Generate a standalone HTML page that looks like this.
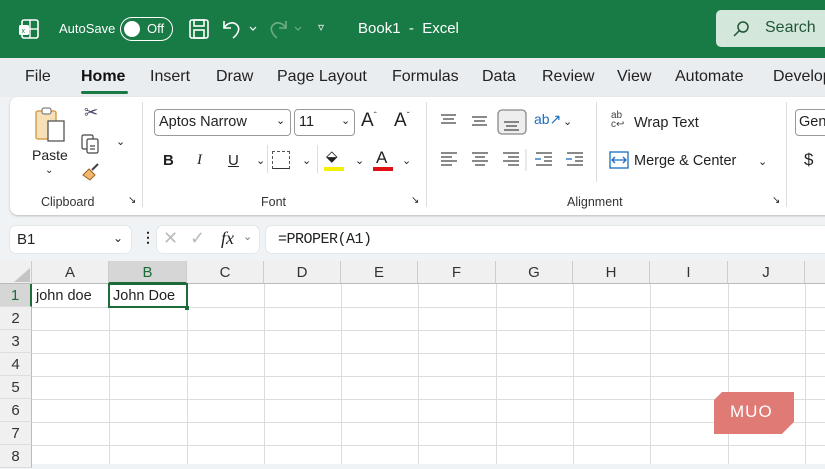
<!DOCTYPE html>
<html><head><meta charset="utf-8"><style>
*{margin:0;padding:0;box-sizing:border-box}
body{width:825px;height:464px;overflow:hidden;background:#f0f3f5;font-family:"Liberation Sans",sans-serif;position:relative;color:#222}
.abs{position:absolute}
.title{left:0;top:0;width:825px;height:58px;background:#187a44;color:#fff}
.tabs{top:58px;left:0;width:825px;height:39px;background:#e9edf0;font-size:16px}
.tabs span{position:absolute;top:10px}
.rib{left:10px;top:97px;width:830px;height:118px;background:#fff;border-radius:8px;box-shadow:0 1px 2px #bbb}
.lbl{font-size:12.5px;color:#333}
.box{border:1px solid #999;border-radius:4px;background:#fff}
.sep{width:1px;background:#ddd}
.grid{left:0;top:261px;width:825px;height:203px;background:#fff}
.ch{top:0;height:23px;background:#f0f0f0;border-bottom:1px solid #bbb;font-size:15px;text-align:center;line-height:23px;border-right:1px solid #ccc;color:#333}
.rh{left:0;width:32px;height:23px;background:#f0f0f0;border-right:1px solid #bbb;font-size:15px;text-align:center;line-height:24px;color:#333;border-bottom:1px solid #ddd}
</style></head><body>
<div class="abs title">
 <svg class="abs" style="left:18px;top:18px" width="22" height="22" viewBox="0 0 22 22"><rect x="4" y="2" width="16" height="18" rx="2" fill="none" stroke="#fff" stroke-width="1.6"/><line x1="12" y1="2" x2="12" y2="20" stroke="#fff" stroke-width="1.4"/><line x1="4" y1="11" x2="20" y2="11" stroke="#fff" stroke-width="1.4"/><rect x="1" y="7" width="10" height="10" rx="1.5" fill="#fff"/><text x="3.5" y="15" font-size="7" fill="#187a44" font-family="Liberation Sans">x</text></svg>
 <span class="abs" style="left:59px;top:21px;font-size:13px">AutoSave</span>
 <div class="abs" style="left:120px;top:17px;width:53px;height:24px;border:1.5px solid #fff;border-radius:12px"><div class="abs" style="left:3px;top:2.5px;width:16px;height:16px;border-radius:50%;background:#fff"></div><span class="abs" style="left:26px;top:3px;font-size:13px">Off</span></div>
 <svg class="abs" style="left:188px;top:18px" width="22" height="22" viewBox="0 0 22 22" fill="none" stroke="#fff" stroke-width="1.6"><rect x="2" y="2" width="18" height="18" rx="2"/><rect x="6" y="2" width="10" height="6"/><rect x="6" y="12" width="10" height="8"/></svg>
 <svg class="abs" style="left:220px;top:17px" width="44" height="24" viewBox="0 0 44 24" fill="none" stroke="#fff" stroke-width="1.6"><path d="M4 4v7h7M4 11c3-5 9-7 13-3 4 4 0 10-4 13"/><path d="M30 10l3 3 3-3" stroke-width="1.2"/></svg>
 <svg class="abs" style="left:268px;top:17px" width="44" height="24" viewBox="0 0 44 24" fill="none" stroke="#6fae88" stroke-width="1.6"><path d="M18 4v7h-7M18 11c-3-5-9-7-13-3-4 4 0 10 4 13"/><path d="M27 10l3 3 3-3" stroke-width="1.2"/></svg>
 <span class="abs" style="left:318px;top:20px;font-size:12px">▿</span>
 <span class="abs" style="left:358px;top:20px;font-size:15px">Book1 &nbsp;-&nbsp; Excel</span>
 <div class="abs" style="left:716px;top:10px;width:120px;height:37px;background:#d3e8db;border-radius:5px;color:#225533"><svg class="abs" style="left:16px;top:10px" width="18" height="18" viewBox="0 0 18 18" fill="none" stroke="#225533" stroke-width="1.5"><circle cx="11" cy="7" r="5"/><line x1="7.5" y1="10.5" x2="2" y2="16"/></svg><span class="abs" style="left:49px;top:9px;font-size:16px">Search</span></div>
</div>
<div class="abs tabs">
 <span style="left:25px">File</span><span style="left:81px;font-weight:bold;color:#111">Home</span>
 <div class="abs" style="left:81px;top:33px;width:47px;height:3px;background:#187a44;border-radius:2px"></div>
 <span style="left:150px">Insert</span><span style="left:216px">Draw</span><span style="left:277px">Page Layout</span><span style="left:392px">Formulas</span><span style="left:482px">Data</span><span style="left:542px">Review</span><span style="left:617px">View</span><span style="left:675px">Automate</span><span style="left:773px">Developer</span>
</div>
<div class="abs rib">
 <svg class="abs" style="left:24px;top:8px" width="36" height="40" viewBox="0 0 36 40"><rect x="2" y="6" width="20" height="28" rx="2" fill="#f5e0b8" stroke="#d9a050" stroke-width="1.5"/><rect x="8" y="3" width="9" height="6" rx="2" fill="#fff" stroke="#666"/><rect x="14" y="16" width="16" height="20" fill="#fff" stroke="#555" stroke-width="1.3"/></svg>
 <span class="abs" style="left:22px;top:50px;font-size:14px">Paste</span><span class="abs" style="left:35px;top:68px;font-size:10px">⌄</span>
 <span class="abs" style="left:74px;top:6px;font-size:17px;color:#446">✂</span>
 <svg class="abs" style="left:70px;top:36px" width="22" height="22" viewBox="0 0 22 22" fill="none" stroke="#444" stroke-width="1.2"><rect x="2" y="2" width="11" height="14" rx="1.5"/><rect x="7" y="6" width="11" height="14" rx="1.5" fill="#fff"/><line x1="10" y1="13" x2="15" y2="13"/><line x1="10" y1="16" x2="15" y2="16"/></svg>
 <span class="abs" style="left:106px;top:38px;font-size:11px">⌄</span>
 <svg class="abs" style="left:70px;top:64px" width="22" height="22" viewBox="0 0 22 22"><path d="M3 14l6-6 6 6-5 5z" fill="#f1b870" stroke="#a06020"/><path d="M12 9l6-6" stroke="#444" stroke-width="2"/></svg>
 <span class="abs lbl" style="left:31px;top:98px">Clipboard</span><span class="abs" style="left:118px;top:98px;font-size:10px">↘</span>
 <div class="abs sep" style="left:132px;top:5px;height:105px"></div>
 <div class="abs box" style="left:144px;top:12px;width:137px;height:27px"><span class="abs" style="left:4px;top:4px;font-size:14.5px">Aptos Narrow</span><span class="abs" style="left:121px;top:4px;font-size:11px">⌄</span></div>
 <div class="abs box" style="left:284px;top:12px;width:61px;height:27px"><span class="abs" style="left:4px;top:4px;font-size:14.5px">11</span><span class="abs" style="left:46px;top:4px;font-size:11px">⌄</span></div>
 <span class="abs" style="left:351px;top:13px;font-size:19px">A<sup style="font-size:9px">ˆ</sup></span><span class="abs" style="left:384px;top:13px;font-size:19px">A<sup style="font-size:9px">ˇ</sup></span>
 <span class="abs" style="left:153px;top:55px;font-size:15px;font-weight:bold">B</span>
 <span class="abs" style="left:187px;top:55px;font-size:15px;font-style:italic;font-family:'Liberation Serif'">I</span>
 <span class="abs" style="left:218px;top:55px;font-size:15px;text-decoration:underline">U</span><span class="abs" style="left:246px;top:57px;font-size:11px">⌄</span>
 <div class="abs sep" style="left:257px;top:48px;height:28px"></div>
 <div class="abs" style="left:262px;top:54px;width:18px;height:18px;border:1px dashed #555;border-bottom:1.5px solid #333"></div><span class="abs" style="left:292px;top:57px;font-size:11px">⌄</span>
 <div class="abs sep" style="left:307px;top:48px;height:28px"></div>
 <span class="abs" style="left:316px;top:50px;font-size:15px">⬙</span><div class="abs" style="left:314px;top:70px;width:20px;height:4px;background:#f4f000"></div><span class="abs" style="left:345px;top:57px;font-size:11px">⌄</span>
 <span class="abs" style="left:366px;top:51px;font-size:17px">A</span><div class="abs" style="left:363px;top:70px;width:20px;height:4px;background:#e01010"></div><span class="abs" style="left:392px;top:57px;font-size:11px">⌄</span>
 <span class="abs lbl" style="left:251px;top:98px">Font</span><span class="abs" style="left:401px;top:98px;font-size:10px">↘</span>
 <div class="abs sep" style="left:416px;top:5px;height:105px"></div>
 <svg class="abs" style="left:428px;top:12px" width="95" height="26" viewBox="0 0 95 26" stroke="#444" stroke-width="1.3"><path d="M3 6h15M5 10h11M3 14h15"/><path d="M34 8h15M36 12h11M34 16h15"/><rect x="60" y="1" width="28" height="24" rx="4" fill="#eee" stroke="#888"/><path d="M66 13h15M68 17h11M66 21h15"/></svg>
 <span class="abs" style="left:524px;top:14px;font-size:14px;color:#1a6dc0">ab↗</span><span class="abs" style="left:553px;top:18px;font-size:11px">⌄</span>
 <svg class="abs" style="left:428px;top:52px" width="150" height="22" viewBox="0 0 150 22" stroke="#444" stroke-width="1.3"><path d="M3 4h16M3 8h11M3 12h16M3 16h11"/><path d="M34 4h16M37 8h10M34 12h16M37 16h10"/><path d="M65 4h16M70 8h11M65 12h16M70 16h11"/><line x1="88" y1="0" x2="88" y2="22" stroke="#ddd"/><path d="M98 4h16M106 8h8M106 12h8M98 16h16"/><path d="M97 10h6" stroke="#1a6dc0"/><path d="M129 4h16M137 8h8M137 12h8M129 16h16"/><path d="M128 10h6" stroke="#1a6dc0"/></svg>
 <div class="abs sep" style="left:586px;top:5px;height:80px"></div>
 <span class="abs" style="left:601px;top:14px;font-size:10px;color:#444;line-height:9px">ab<br>c↩</span><span class="abs" style="left:624px;top:18px;font-size:14.5px">Wrap Text</span>
 <svg class="abs" style="left:599px;top:54px" width="20" height="18" viewBox="0 0 20 18" fill="none" stroke="#1a6dc0" stroke-width="1.3"><rect x="1" y="1" width="18" height="16"/><path d="M4 9h12M6 6l-3 3 3 3M14 6l3 3-3 3"/></svg>
 <span class="abs" style="left:624px;top:56px;font-size:14.5px">Merge &amp; Center</span><span class="abs" style="left:748px;top:58px;font-size:11px">⌄</span>
 <span class="abs lbl" style="left:557px;top:98px">Alignment</span><span class="abs" style="left:762px;top:98px;font-size:10px">↘</span>
 <div class="abs sep" style="left:776px;top:5px;height:105px"></div>
 <div class="abs box" style="left:785px;top:12px;width:60px;height:27px"><span class="abs" style="left:3px;top:4px;font-size:14.5px">General</span></div>
 <span class="abs" style="left:794px;top:53px;font-size:17px">$</span>
</div>
<div class="abs" style="left:10px;top:226px;width:121px;height:27px;background:#fff;border-radius:5px;box-shadow:0 0 1px #aaa"><span class="abs" style="left:7px;top:5px;font-size:15px">B1</span><span class="abs" style="left:103px;top:5px;font-size:12px">⌄</span></div>
<span class="abs" style="left:141px;top:229px;font-size:14px;font-weight:bold">⋮</span>
<div class="abs" style="left:157px;top:226px;width:102px;height:27px;background:#fff;border-radius:5px;box-shadow:0 0 1px #aaa"><span class="abs" style="left:6px;top:2px;font-size:18px;color:#bbb">✕</span><span class="abs" style="left:33px;top:2px;font-size:18px;color:#bbb">✓</span><span class="abs" style="left:64px;top:2px;font-size:18px;font-style:italic;font-family:'Liberation Serif'">fx</span><span class="abs" style="left:86px;top:4px;font-size:11px;color:#777">⌄</span></div>
<div class="abs" style="left:266px;top:226px;width:570px;height:27px;background:#fff;border-radius:5px;box-shadow:0 0 1px #aaa"><span class="abs" style="left:12px;top:5px;font-size:15px;font-family:'Liberation Mono',monospace;letter-spacing:-0.5px">=PROPER(A1)</span></div>
<div class="abs grid">
 <div class="abs ch" style="left:0;width:32px"></div>
 <svg class="abs" style="left:14px;top:7px" width="16" height="14"><path d="M16 0V14H0z" fill="#c4c4c4"/></svg>
 <div class="abs ch" style="left:32px;width:77px">A</div>
 <div class="abs ch" style="left:109px;width:78px;background:#d6d6d6;color:#1e6b3a;border-bottom:2px solid #1e6b3a">B</div>
 <div class="abs ch" style="left:187px;width:77px">C</div>
 <div class="abs ch" style="left:264px;width:77px">D</div>
 <div class="abs ch" style="left:341px;width:77px">E</div>
 <div class="abs ch" style="left:418px;width:78px">F</div>
 <div class="abs ch" style="left:496px;width:77px">G</div>
 <div class="abs ch" style="left:573px;width:77px">H</div>
 <div class="abs ch" style="left:650px;width:78px">I</div>
 <div class="abs ch" style="left:728px;width:77px">J</div>
 <div class="abs ch" style="left:805px;width:30px"></div>
 <svg class="abs" style="left:32px;top:23px" width="793" height="180"><g stroke="#dcdcdc" stroke-width="1">
  <path d="M77.5 0V180M155.5 0V180M232.5 0V180M309.5 0V180M386.5 0V180M464.5 0V180M541.5 0V180M618.5 0V180M696.5 0V180M773.5 0V180"/>
  <path d="M0 23.5H793M0 46.5H793M0 69.5H793M0 92.5H793M0 115.5H793M0 138.5H793M0 161.5H793"/></g></svg>
 <div class="abs rh" style="top:23px;background:#d6d6d6;color:#1e6b3a;border-right:2px solid #1e6b3a">1</div>
 <div class="abs rh" style="top:46px">2</div><div class="abs rh" style="top:69px">3</div><div class="abs rh" style="top:92px">4</div><div class="abs rh" style="top:115px">5</div><div class="abs rh" style="top:138px">6</div><div class="abs rh" style="top:161px">7</div><div class="abs rh" style="top:184px">8</div>
 <span class="abs" style="left:36px;top:27px;font-size:14.5px">john doe</span>
 <div class="abs" style="left:108px;top:22px;width:80px;height:25px;border:2px solid #1e6b3a"></div>
 <div class="abs" style="left:185px;top:45px;width:4px;height:4px;background:#1e6b3a"></div>
 <span class="abs" style="left:113px;top:27px;font-size:14.5px">John Doe</span>
 <svg class="abs" style="left:714px;top:131px" width="80" height="42" viewBox="0 0 80 42"><path d="M8 0H80V30L68 42H0V8z" fill="#e07a74"/><path d="M68 42L80 30V42z" fill="#fff" opacity=".85"/><text x="16" y="25" font-size="17" fill="#fff" font-family="Liberation Sans" letter-spacing="1">MUO</text></svg>
</div>
</body></html>
